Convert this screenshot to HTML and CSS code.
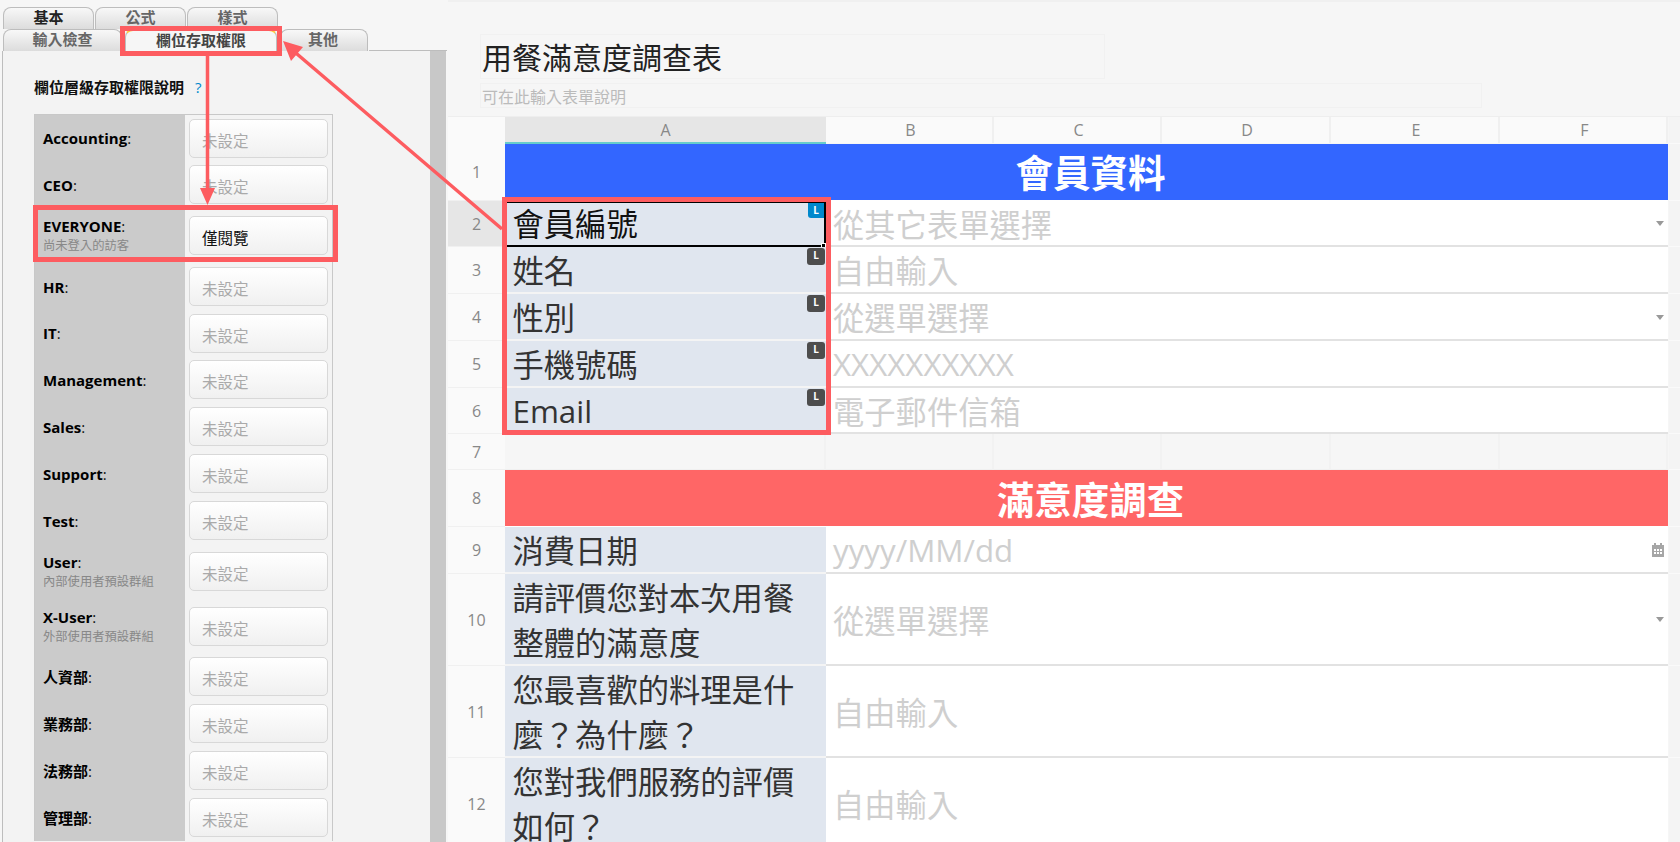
FILE: index.html
```html
<!DOCTYPE html>
<html lang="zh-Hant">
<head>
    <meta charset="UTF-8">
    <title>用餐滿意度調查表</title>
    <link rel="stylesheet" href="styles.css">
</head>
<body>

    <aside class="panel">
        <div class="tab-row first">
            <div class="tab strong w91">基本</div>
            <div class="tab w91">公式</div>
            <div class="tab w91">樣式</div>
        </div>
        <div class="tab-row second">
            <div class="tab w118">輸入檢查</div>
            <div class="tab active">欄位存取權限</div>
            <div class="tab w88">其他</div>
            <div class="tab-rest"></div>
        </div>

        <div class="panel-body">
            <div class="panel-content">
                <h2 class="perm-title">欄位層級存取權限說明<span class="help">?</span></h2>
                <div class="perm-table">
                    <div class="perm-row low"><div class="perm-label"><div><b>Accounting</b>:</div></div><div class="perm-cell"><div class="perm-btn">未設定</div></div></div>
                    <div class="perm-row"><div class="perm-label"><div><b>CEO</b>:</div></div><div class="perm-cell"><div class="perm-btn">未設定</div></div></div>
                    <div class="perm-row tall"><div class="perm-label"><div><b>EVERYONE</b>:</div><small>尚未登入的訪客</small></div><div class="perm-cell"><div class="perm-btn on">僅閱覽</div></div></div>
                    <div class="perm-row"><div class="perm-label"><div><b>HR</b>:</div></div><div class="perm-cell"><div class="perm-btn">未設定</div></div></div>
                    <div class="perm-row low"><div class="perm-label"><div><b>IT</b>:</div></div><div class="perm-cell"><div class="perm-btn">未設定</div></div></div>
                    <div class="perm-row"><div class="perm-label"><div><b>Management</b>:</div></div><div class="perm-cell"><div class="perm-btn">未設定</div></div></div>
                    <div class="perm-row"><div class="perm-label"><div><b>Sales</b>:</div></div><div class="perm-cell"><div class="perm-btn">未設定</div></div></div>
                    <div class="perm-row"><div class="perm-label"><div><b>Support</b>:</div></div><div class="perm-cell"><div class="perm-btn">未設定</div></div></div>
                    <div class="perm-row"><div class="perm-label"><div><b>Test</b>:</div></div><div class="perm-cell"><div class="perm-btn">未設定</div></div></div>
                    <div class="perm-row tall"><div class="perm-label"><div><b>User</b>:</div><small>內部使用者預設群組</small></div><div class="perm-cell"><div class="perm-btn">未設定</div></div></div>
                    <div class="perm-row short"><div class="perm-label"><div><b>X-User</b>:</div><small>外部使用者預設群組</small></div><div class="perm-cell"><div class="perm-btn">未設定</div></div></div>
                    <div class="perm-row"><div class="perm-label"><div><b>人資部</b>:</div></div><div class="perm-cell"><div class="perm-btn">未設定</div></div></div>
                    <div class="perm-row"><div class="perm-label"><div><b>業務部</b>:</div></div><div class="perm-cell"><div class="perm-btn">未設定</div></div></div>
                    <div class="perm-row"><div class="perm-label"><div><b>法務部</b>:</div></div><div class="perm-cell"><div class="perm-btn">未設定</div></div></div>
                    <div class="perm-row"><div class="perm-label"><div><b>管理部</b>:</div></div><div class="perm-cell"><div class="perm-btn">未設定</div></div></div>
                </div>
            </div>
            <div class="scrollbar"></div>
        </div>
    </aside>

    <main class="sheet-area">
        <div class="form-head">
            <div class="form-title">用餐滿意度調查表</div>
            <div class="form-desc">可在此輸入表單說明</div>
        </div>

        <div class="sheet">
            <!-- column headers -->
            <div class="corner"></div>
            <div class="col-head sel">A</div>
            <div class="col-head">B</div>
            <div class="col-head">C</div>
            <div class="col-head">D</div>
            <div class="col-head">E</div>
            <div class="col-head">F</div>
            <div class="rail"></div>

            <div class="row-head">1</div>
            <div class="banner blue">會員資料</div>
            <div class="rail"></div>

            <div class="row-head sel">2</div>
            <div class="label-cell selected"><span>會員編號</span><span class="badge blue-badge">L</span><i class="handle"></i></div>
            <div class="input-cell">從其它表單選擇<i class="caret"></i></div>
            <div class="rail"></div>

            <div class="row-head">3</div>
            <div class="label-cell"><span>姓名</span><span class="badge">L</span></div>
            <div class="input-cell">自由輸入</div>
            <div class="rail"></div>

            <div class="row-head">4</div>
            <div class="label-cell"><span>性別</span><span class="badge">L</span></div>
            <div class="input-cell">從選單選擇<i class="caret"></i></div>
            <div class="rail"></div>

            <div class="row-head">5</div>
            <div class="label-cell"><span>手機號碼</span><span class="badge">L</span></div>
            <div class="input-cell">XXXXXXXXXX</div>
            <div class="rail"></div>

            <div class="row-head">6</div>
            <div class="label-cell"><span>Email</span><span class="badge">L</span></div>
            <div class="input-cell">電子郵件信箱</div>
            <div class="rail"></div>

            <div class="row-head">7</div>
            <div class="blank"></div>
            <div class="blank"></div>
            <div class="blank"></div>
            <div class="blank"></div>
            <div class="blank"></div>
            <div class="blank"></div>
            <div class="rail"></div>

            <div class="row-head">8</div>
            <div class="banner red">滿意度調查</div>
            <div class="rail"></div>

            <div class="row-head">9</div>
            <div class="label-cell"><span>消費日期</span></div>
            <div class="input-cell">yyyy/MM/dd
                <svg class="cal" width="12" height="14" viewBox="0 0 12 14">
                    <path fill="#a6a6a6" d="M2 0h2v2h4V0h2v2h2v12H0V2h2z"/>
                    <path fill="#fff" d="M2 6h2v2H2zM5 6h2v2H5zM8 6h2v2H8zM2 9h2v2H2zM5 9h2v2H5zM8 9h2v2H8z"/>
                </svg>
            </div>
            <div class="rail"></div>

            <div class="row-head">10</div>
            <div class="label-cell"><span>請評價您對本次用餐<br>整體的滿意度</span></div>
            <div class="input-cell">從選單選擇<i class="caret"></i></div>
            <div class="rail"></div>

            <div class="row-head">11</div>
            <div class="label-cell"><span>您最喜歡的料理是什<br>麼？為什麼？</span></div>
            <div class="input-cell">自由輸入</div>
            <div class="rail"></div>

            <div class="row-head">12</div>
            <div class="label-cell"><span>您對我們服務的評價<br>如何？</span></div>
            <div class="input-cell">自由輸入</div>
            <div class="rail"></div>
        </div>
    </main>

    <!-- red notes drawn on top of the screenshot -->
    <svg class="notes" width="1680" height="842" viewBox="0 0 1680 842">
        <g fill="none" stroke="#fd5c60" stroke-width="5">
            <rect x="122.5" y="28.5" width="157" height="25"/>
            <rect x="35.5" y="207.5" width="300" height="52"/>
            <rect x="504.5" y="199.5" width="324" height="233"/>
        </g>
        <path stroke="#fd5c60" stroke-width="3.5" d="M207.5 56V195M502 229L290 48"/>
        <path fill="#fd5c60" d="M207.5 205L200 188H215zM283 41L303 47L291 61z"/>
    </svg>

</body>
</html>
```

FILE: styles.css
```css
*{
    box-sizing: border-box;
}

html,body{
    margin: 0;
    height: 842px;
    overflow: hidden;
}

body{
    position: relative;
    display: flex;
    width: 1680px;
    background: #f6f6f6;
    font-family: "Open Sans", "Noto Sans CJK TC", sans-serif;
}

/* left panel */
.panel{
    width: 448px;
    height: 842px;
    padding-top: 7px;
    display: flex;
    flex-direction: column;
    background: #f6f6f6;
    flex: none;
}

.tab-row{
    display: flex;
    padding-left: 3px;
    height: 22px;
}

.tab{
    height: 100%;
    margin-right: 1px;
    border: 1px solid #bdbdbd;
    border-bottom: none;
    border-radius: 8px 8px 0 0;
    background: linear-gradient(#f8f8f8, #dcdcdc);
    color: #666;
    font-size: 15px;
    font-weight: bold;
    line-height: 19px;
    text-align: center;
}

.tab.strong{
    color: #222;
}

.w91{
    width: 91px;
}

.w118{
    width: 119px;
    margin-right: 3px;
}

.w88{
    width: 88px;
    padding-right: 2px;
}

.tab.active{
    width: 152px;
    margin-right: 3px;
    background: #f6f6f6;
    border-top: 2px solid #ffc83d;
    color: #444;
}

.tab-rest{
    flex: 1;
    margin-right: 1px;
    border-bottom: 1px solid #bdbdbd;
}

.panel-body{
    flex: 1;
    display: flex;
    margin-left: 2px;
    border-left: 1px solid #bdbdbd;
    min-height: 0;
}

.panel-content{
    width: 427px;
    padding: 26px 0 0 31px;
    background: #f3f3f3;
}

.scrollbar{
    width: 16px;
    background: #c8c8c8;
}

.perm-title{
    margin: 0 0 7px 0;
    height: 30px;
    font-size: 15px;
    line-height: 20px;
    color: #111;
}

.help{
    margin-left: 11px;
    color: #0088cc;
    font-weight: normal;
}

.perm-table{
    width: 299px;
    border: 1px solid #c8c8c8;
    border-bottom: none;
}

.perm-row{
    display: grid;
    grid-template-columns: 150px 1fr;
    height: 47px;
}

.perm-row.low{
    height: 46px;
}

.perm-row.short{
    height: 54px;
}

.perm-row.tall{
    height: 55px;
}

.perm-label{
    display: flex;
    flex-direction: column;
    justify-content: center;
    padding-left: 8px;
    background: #cbcbcb;
    font-size: 15px;
    line-height: 20px;
    color: #111;
}

.perm-label b{
    color: #000;
}

.perm-label small{
    font-size: 12.3px;
    line-height: 19px;
    color: #888;
}

.perm-cell{
    display: flex;
    align-items: center;
    padding: 0 4px;
}

.perm-btn{
    width: 139px;
    height: 39px;
    padding: 7px 0 0 12px;
    border: 1px solid #d8d8d8;
    border-radius: 5px;
    background: linear-gradient(#fff, #f0f0f0);
    color: #aaa;
    font-size: 15.5px;
    line-height: 28px;
}

.perm-btn.on{
    color: #111;
}

/* right side */
.sheet-area{
    flex: 1;
    min-width: 0;
    height: 842px;
    border-top: 2px solid #f0f0f0;
    overflow: hidden;
}

.form-head{
    height: 115px;
    padding: 32px 0 0 32px;
    border-bottom: 1px solid #eee;
}

.form-title{
    width: 625px;
    height: 45px;
    padding-left: 1px;
    border: 1px solid #f1f1f1;
    font-size: 30px;
    line-height: 45px;
    color: #222;
}

.form-desc{
    width: 1002px;
    height: 25px;
    margin-top: 4px;
    padding-left: 1px;
    border: 1px solid #f1f1f1;
    font-size: 16px;
    line-height: 27px;
    color: #bbb;
}

.sheet{
    display: grid;
    grid-template-columns: 57px 321px 168px 168px 169px 169px 168px 12px;
    grid-template-rows: 27px 57px 46px 47px 47px 47px 46px 36px 57px 47px 92px 92px 92px;
}

.corner{
    background: #fafafa;
}

.col-head{
    height: 26px;
    padding-left: 3px;
    background: #fafafa;
    border-right: 2px solid #f0f0f0;
    color: #888;
    font-size: 16px;
    line-height: 27px;
    text-align: center;
}

.col-head.sel{
    height: 27px;
    padding-left: 0;
    background: #e6e6e6;
    border-right: none;
    border-bottom: 2px solid #66cccc;
    color: #888;
}

.rail{
    margin-left: 1px;
    background: #f4f4f4;
    border-bottom: 1px solid #fafafa;
}

.row-head{
    display: flex;
    align-items: center;
    justify-content: center;
    background: #fafafa;
    border-bottom: 1px solid #f0f0f0;
    color: #888;
    font-size: 16px;
}

.row-head.sel{
    background: #e6e6e6;
}

.banner{
    grid-column: span 6;
    padding-left: 8px;
    color: #fff;
    font-size: 37.5px;
    font-weight: bold;
    text-align: center;
    border-bottom: 1px solid #fff;
}

.banner.blue{
    background: #3366ff;
    line-height: 57px;
}

.banner.red{
    background: #ff6666;
    line-height: 59px;
}

.label-cell{
    position: relative;
    display: flex;
    flex-direction: column;
    justify-content: center;
    padding: 3px 8px 0 7.5px;
    background: #e0e6ef;
    border-bottom: 2px solid #f4f4f4;
    color: #333;
    font-size: 31.3px;
    line-height: 45px;
    white-space: nowrap;
}

.label-cell.selected{
    padding-top: 0;
    color: #111;
    border: 2px solid #000;
    border-width: 2px 2px 2px 0;
}

.input-cell{
    position: relative;
    grid-column: span 5;
    display: flex;
    align-items: center;
    padding-left: 7px;
    background: #fff;
    border-bottom: 2px solid #e2e2e2;
    color: #cfcfcf;
    font-size: 31.3px;
}

.blank{
    background: #f6f6f6;
    border-right: 2px solid #f2f2f2;
    border-bottom: 1px solid #f0f0f0;
}

.badge{
    position: absolute;
    top: 1px;
    right: 1px;
    width: 18px;
    height: 17px;
    border-radius: 3px;
    background: #4d4d4d;
    color: #fff;
    font-size: 10px;
    font-weight: bold;
    line-height: 15px;
    text-align: center;
}

.blue-badge{
    top: 0;
    right: 0;
    width: 16px;
    height: 15px;
    border-radius: 0 0 0 3px;
    background: #0088cc;
}

.handle{
    position: absolute;
    right: -2px;
    bottom: -3px;
    width: 5px;
    height: 5px;
    background: #000;
    border: 1px solid #fff;
}

.caret{
    position: absolute;
    right: 4px;
    top: 50%;
    margin-top: -2px;
    width: 0;
    height: 0;
    border-left: 4.5px solid transparent;
    border-right: 4.5px solid transparent;
    border-top: 5px solid #999;
}

.cal{
    position: absolute;
    right: 4px;
    top: 16px;
}

.notes{
    position: absolute;
    left: 0;
    top: 0;
    pointer-events: none;
}
```
